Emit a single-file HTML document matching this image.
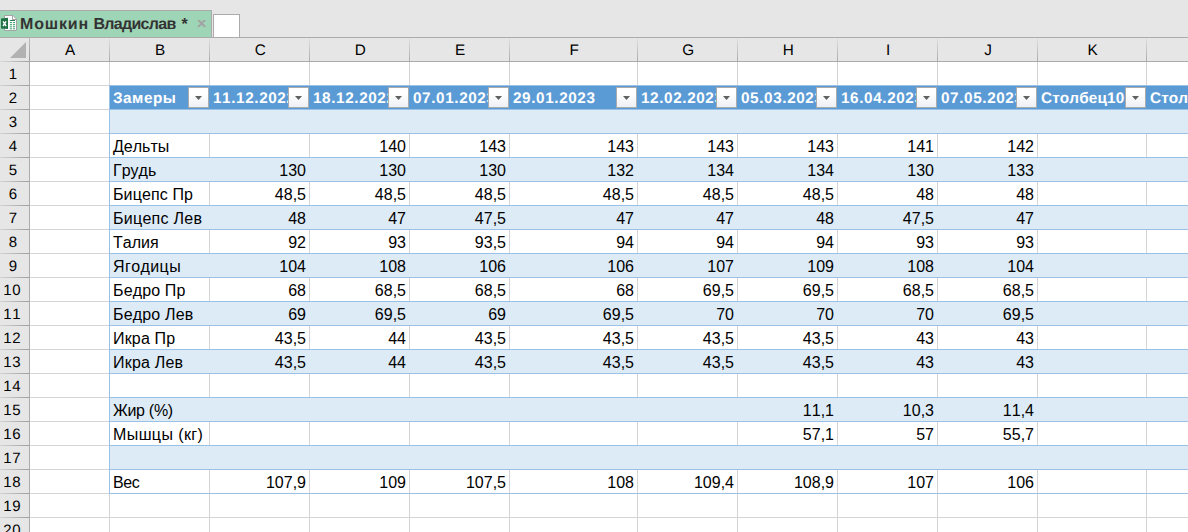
<!DOCTYPE html>
<html lang="ru"><head><meta charset="utf-8"><title>Мошкин Владислав</title>
<style>
html,body{margin:0;padding:0}
body{width:1188px;height:532px;overflow:hidden;position:relative;background:#fff;font-family:"Liberation Sans",sans-serif;font-size:16px;color:#000;font-kerning:none}
div,span{position:absolute;box-sizing:border-box;white-space:nowrap}
.top{left:0;top:0;width:1188px;height:38px;background:#e6e6e6;border-bottom:1px solid #ababab}
.tab{left:0;top:10px;width:212px;height:27px;background:#9fd5b7;border-top:1px solid #ababab;border-right:1px solid #ababab}
.tabt{left:20px;top:4px;font-weight:bold;font-size:16px;letter-spacing:0;text-rendering:geometricPrecision;line-height:20px;color:#333}
.close{left:196.700px;top:2px;font-weight:bold;font-size:13.300px;line-height:20px;color:#a2a2a2;transform:scaleX(1.27);transform-origin:0 0;text-rendering:geometricPrecision}
.tabt span{position:static}.w1{letter-spacing:.85px}.w2{letter-spacing:-0.7px}.w3{margin-left:1.5px}
.nt{left:213px;top:14px;width:27px;height:23px;background:#fff;border:1px solid #ababab;border-bottom:none}
.ch{left:0;top:38px;width:1188px;height:24px;background:#e6e6e6;border-bottom:1px solid #ababab}
.cl{top:38px;height:24px;line-height:25px;text-align:center;padding-left:1.400px;font-size:15.3px;text-rendering:geometricPrecision}
.cd{top:38px;width:1px;height:23px;background:linear-gradient(#e0e0e0,#ababab)}
.rhb{left:0;top:62px;width:30px;height:470px;background:#e6e6e6;border-right:1px solid #ababab}
.rl{left:0;width:29px;padding-right:3px;height:24px;line-height:26px;text-align:center;font-size:15px;text-rendering:geometricPrecision}
.rd{left:0;width:29px;height:1px;background:linear-gradient(90deg,#d2d2d2,#9e9e9e)}
.vg{top:62px;width:1px;height:470px;background:#d4d4d4}
.hg{left:30px;width:1158px;height:1px;background:#d4d4d4}
.band{left:109px;width:1079px;background:#ddebf7}
.bl{left:109px;width:1079px;height:1px;background:#9bc2e6}
.hdr{left:109px;top:85px;width:1079px;height:24px;background:#5b9bd5;border-top:1px solid #9bc2e6}
.ht{top:85px;height:24px;line-height:27px;color:#fff;font-weight:bold;overflow:hidden;font-size:15.300px;letter-spacing:.5px;text-rendering:geometricPrecision}
.fb{top:87px;width:21px;height:21px;border:1px solid #ababab;background:linear-gradient(#fff 30%,#edf0f5)}
.fb svg{position:absolute;left:6px;top:8px}
.c{height:24px;line-height:25px}
.n{text-align:right}
</style></head><body>

<div class="top"></div>
<div class="tab"><svg style="position:absolute;left:0;top:3px" width="18" height="18" viewBox="0 0 18 18"><path d="M4.500 1.500H13L16.500 5V16.500H4.500Z" fill="#fff" stroke="#a3a3a3"/><path d="M12.500 1.500V5.500H16.500" fill="none" stroke="#a3a3a3"/><g fill="#4aa777"><rect x="9.800" y="6" width="5.200" height="1" fill="#2b7d52"/><rect x="9.800" y="8" width="2.200" height="1.100"/><rect x="12.900" y="8" width="2.200" height="1.100"/><rect x="9.800" y="10.100" width="2.200" height="1.100"/><rect x="12.900" y="10.100" width="2.200" height="1.100"/><rect x="9.800" y="12.200" width="2.200" height="1.100"/><rect x="12.900" y="12.200" width="2.200" height="1.100"/><rect x="9.800" y="14.200" width="2.200" height="1.100"/><rect x="12.900" y="14.200" width="2.200" height="1.100"/></g><path d="M1 4.400L8 3.800V15.100L1 14.500Z" fill="#1f7244"/><path d="M3 7.300L6.100 12M6.100 7.300L3 12" stroke="#fff" stroke-width="1.400" fill="none"/></svg><span class="tabt"><span class="w1">Мошкин</span> <span class="w2">Владислав</span> <span class="w3">*</span></span><span class="close">x</span></div>
<div class="nt"></div>
<div class="ch"></div>
<svg style="position:absolute;left:10px;top:42px" width="17" height="17"><path d="M16 0v16h-16z" fill="#b2b2b2"/></svg>
<div class="cd" style="left:29px;background:linear-gradient(#bdbdbd,#9c9c9c)"></div>
<div style="left:0;top:61px;width:29px;height:1px;background:linear-gradient(90deg,#dadada,#a2a2a2)"></div>
<div class="cl" style="left:30px;width:79px">A</div>
<div class="cd" style="left:109px"></div>
<div class="cl" style="left:110px;width:99px">B</div>
<div class="cd" style="left:209px"></div>
<div class="cl" style="left:210px;width:99px">C</div>
<div class="cd" style="left:309px"></div>
<div class="cl" style="left:310px;width:99px">D</div>
<div class="cd" style="left:409px"></div>
<div class="cl" style="left:410px;width:99px">E</div>
<div class="cd" style="left:509px"></div>
<div class="cl" style="left:510px;width:127px">F</div>
<div class="cd" style="left:637px"></div>
<div class="cl" style="left:638px;width:99px">G</div>
<div class="cd" style="left:737px"></div>
<div class="cl" style="left:738px;width:99px">H</div>
<div class="cd" style="left:837px"></div>
<div class="cl" style="left:838px;width:99px">I</div>
<div class="cd" style="left:937px"></div>
<div class="cl" style="left:938px;width:99px">J</div>
<div class="cd" style="left:1037px"></div>
<div class="cl" style="left:1038px;width:108px">K</div>
<div class="cd" style="left:1146px"></div>
<div class="cl" style="left:1147px;width:113px">L</div>
<div class="cd" style="left:1260px"></div>
<div class="rhb"></div>
<div class="rl" style="top:62px">1</div>
<div class="rd" style="top:85px"></div>
<div class="rl" style="top:86px">2</div>
<div class="rd" style="top:109px"></div>
<div class="rl" style="top:110px">3</div>
<div class="rd" style="top:133px"></div>
<div class="rl" style="top:134px">4</div>
<div class="rd" style="top:157px"></div>
<div class="rl" style="top:158px">5</div>
<div class="rd" style="top:181px"></div>
<div class="rl" style="top:182px">6</div>
<div class="rd" style="top:205px"></div>
<div class="rl" style="top:206px">7</div>
<div class="rd" style="top:229px"></div>
<div class="rl" style="top:230px">8</div>
<div class="rd" style="top:253px"></div>
<div class="rl" style="top:254px">9</div>
<div class="rd" style="top:277px"></div>
<div class="rl" style="top:278px;padding-right:4.400px;letter-spacing:.6px">10</div>
<div class="rd" style="top:301px"></div>
<div class="rl" style="top:302px;padding-right:4.400px;letter-spacing:.6px">11</div>
<div class="rd" style="top:325px"></div>
<div class="rl" style="top:326px;padding-right:4.400px;letter-spacing:.6px">12</div>
<div class="rd" style="top:349px"></div>
<div class="rl" style="top:350px;padding-right:4.400px;letter-spacing:.6px">13</div>
<div class="rd" style="top:373px"></div>
<div class="rl" style="top:374px;padding-right:4.400px;letter-spacing:.6px">14</div>
<div class="rd" style="top:397px"></div>
<div class="rl" style="top:398px;padding-right:4.400px;letter-spacing:.6px">15</div>
<div class="rd" style="top:421px"></div>
<div class="rl" style="top:422px;padding-right:4.400px;letter-spacing:.6px">16</div>
<div class="rd" style="top:445px"></div>
<div class="rl" style="top:446px;padding-right:4.400px;letter-spacing:.6px">17</div>
<div class="rd" style="top:469px"></div>
<div class="rl" style="top:470px;padding-right:4.400px;letter-spacing:.6px">18</div>
<div class="rd" style="top:493px"></div>
<div class="rl" style="top:494px;padding-right:4.400px;letter-spacing:.6px">19</div>
<div class="rd" style="top:517px"></div>
<div class="rl" style="top:518px;padding-right:4.400px;letter-spacing:.6px">20</div>
<div class="rd" style="top:541px"></div>
<div class="vg" style="left:109px"></div>
<div class="vg" style="left:209px"></div>
<div class="vg" style="left:309px"></div>
<div class="vg" style="left:409px"></div>
<div class="vg" style="left:509px"></div>
<div class="vg" style="left:637px"></div>
<div class="vg" style="left:737px"></div>
<div class="vg" style="left:837px"></div>
<div class="vg" style="left:937px"></div>
<div class="vg" style="left:1037px"></div>
<div class="vg" style="left:1146px"></div>
<div class="vg" style="left:1260px"></div>
<div class="hg" style="top:85px"></div>
<div class="hg" style="top:109px"></div>
<div class="hg" style="top:133px"></div>
<div class="hg" style="top:157px"></div>
<div class="hg" style="top:181px"></div>
<div class="hg" style="top:205px"></div>
<div class="hg" style="top:229px"></div>
<div class="hg" style="top:253px"></div>
<div class="hg" style="top:277px"></div>
<div class="hg" style="top:301px"></div>
<div class="hg" style="top:325px"></div>
<div class="hg" style="top:349px"></div>
<div class="hg" style="top:373px"></div>
<div class="hg" style="top:397px"></div>
<div class="hg" style="top:421px"></div>
<div class="hg" style="top:445px"></div>
<div class="hg" style="top:469px"></div>
<div class="hg" style="top:493px"></div>
<div class="hg" style="top:517px"></div>
<div class="hg" style="top:541px"></div>
<div class="hdr"></div>
<div class="band" style="top:109px;height:24px"></div>
<div class="band" style="top:157px;height:24px"></div>
<div class="band" style="top:205px;height:24px"></div>
<div class="band" style="top:253px;height:24px"></div>
<div class="band" style="top:301px;height:24px"></div>
<div class="band" style="top:349px;height:24px"></div>
<div class="band" style="top:397px;height:24px"></div>
<div class="band" style="top:445px;height:24px"></div>
<div class="bl" style="top:109px"></div>
<div class="bl" style="top:133px"></div>
<div class="bl" style="top:157px"></div>
<div class="bl" style="top:181px"></div>
<div class="bl" style="top:205px"></div>
<div class="bl" style="top:229px"></div>
<div class="bl" style="top:253px"></div>
<div class="bl" style="top:277px"></div>
<div class="bl" style="top:301px"></div>
<div class="bl" style="top:325px"></div>
<div class="bl" style="top:349px"></div>
<div class="bl" style="top:373px"></div>
<div class="bl" style="top:397px"></div>
<div class="bl" style="top:421px"></div>
<div class="bl" style="top:445px"></div>
<div class="bl" style="top:469px"></div>
<div class="bl" style="top:493px"></div>
<div style="left:109px;top:85px;width:1px;height:408px;background:#9bc2e6"></div>
<div class="ht" style="left:113px;width:75px">Замеры</div>
<div class="fb" style="left:188px"><svg width="7" height="4" viewBox="0 0 7 4"><path d="M0 0H7L3.500 4Z" fill="#606060"/></svg></div>
<div class="ht" style="left:213px;width:75px;letter-spacing:0.6px">11.12.2022</div>
<div class="fb" style="left:288px"><svg width="7" height="4" viewBox="0 0 7 4"><path d="M0 0H7L3.500 4Z" fill="#606060"/></svg></div>
<div class="ht" style="left:313px;width:75px;letter-spacing:0.6px">18.12.2022</div>
<div class="fb" style="left:388px"><svg width="7" height="4" viewBox="0 0 7 4"><path d="M0 0H7L3.500 4Z" fill="#606060"/></svg></div>
<div class="ht" style="left:413px;width:75px;letter-spacing:0.6px">07.01.2023</div>
<div class="fb" style="left:488px"><svg width="7" height="4" viewBox="0 0 7 4"><path d="M0 0H7L3.500 4Z" fill="#606060"/></svg></div>
<div class="ht" style="left:513px;width:103px;letter-spacing:0.6px">29.01.2023</div>
<div class="fb" style="left:616px"><svg width="7" height="4" viewBox="0 0 7 4"><path d="M0 0H7L3.500 4Z" fill="#606060"/></svg></div>
<div class="ht" style="left:641px;width:75px;letter-spacing:0.6px">12.02.2023</div>
<div class="fb" style="left:716px"><svg width="7" height="4" viewBox="0 0 7 4"><path d="M0 0H7L3.500 4Z" fill="#606060"/></svg></div>
<div class="ht" style="left:741px;width:75px;letter-spacing:0.6px">05.03.2023</div>
<div class="fb" style="left:816px"><svg width="7" height="4" viewBox="0 0 7 4"><path d="M0 0H7L3.500 4Z" fill="#606060"/></svg></div>
<div class="ht" style="left:841px;width:75px;letter-spacing:0.6px">16.04.2023</div>
<div class="fb" style="left:916px"><svg width="7" height="4" viewBox="0 0 7 4"><path d="M0 0H7L3.500 4Z" fill="#606060"/></svg></div>
<div class="ht" style="left:941px;width:75px;letter-spacing:0.6px">07.05.2023</div>
<div class="fb" style="left:1016px"><svg width="7" height="4" viewBox="0 0 7 4"><path d="M0 0H7L3.500 4Z" fill="#606060"/></svg></div>
<div class="ht" style="left:1041px;width:84px;letter-spacing:.15px">Столбец10</div>
<div class="fb" style="left:1125px"><svg width="7" height="4" viewBox="0 0 7 4"><path d="M0 0H7L3.500 4Z" fill="#606060"/></svg></div>
<div class="ht" style="left:1150px;width:89px;letter-spacing:.15px">Столбец11</div>
<div class="fb" style="left:1239px"><svg width="7" height="4" viewBox="0 0 7 4"><path d="M0 0H7L3.500 4Z" fill="#606060"/></svg></div>
<div class="c" style="left:113px;top:134px">Дельты</div>
<div class="c n" style="left:310px;width:96px;top:134px">140</div>
<div class="c n" style="left:410px;width:96px;top:134px">143</div>
<div class="c n" style="left:510px;width:124px;top:134px">143</div>
<div class="c n" style="left:638px;width:96px;top:134px">143</div>
<div class="c n" style="left:738px;width:96px;top:134px">143</div>
<div class="c n" style="left:838px;width:96px;top:134px">141</div>
<div class="c n" style="left:938px;width:96px;top:134px">142</div>
<div class="c" style="left:113px;top:158px">Грудь</div>
<div class="c n" style="left:210px;width:96px;top:158px">130</div>
<div class="c n" style="left:310px;width:96px;top:158px">130</div>
<div class="c n" style="left:410px;width:96px;top:158px">130</div>
<div class="c n" style="left:510px;width:124px;top:158px">132</div>
<div class="c n" style="left:638px;width:96px;top:158px">134</div>
<div class="c n" style="left:738px;width:96px;top:158px">134</div>
<div class="c n" style="left:838px;width:96px;top:158px">130</div>
<div class="c n" style="left:938px;width:96px;top:158px">133</div>
<div class="c" style="left:113px;top:182px;letter-spacing:0.12px">Бицепс Пр</div>
<div class="c n" style="left:210px;width:96px;top:182px">48,5</div>
<div class="c n" style="left:310px;width:96px;top:182px">48,5</div>
<div class="c n" style="left:410px;width:96px;top:182px">48,5</div>
<div class="c n" style="left:510px;width:124px;top:182px">48,5</div>
<div class="c n" style="left:638px;width:96px;top:182px">48,5</div>
<div class="c n" style="left:738px;width:96px;top:182px">48,5</div>
<div class="c n" style="left:838px;width:96px;top:182px">48</div>
<div class="c n" style="left:938px;width:96px;top:182px">48</div>
<div class="c" style="left:113px;top:206px;letter-spacing:0.27px">Бицепс Лев</div>
<div class="c n" style="left:210px;width:96px;top:206px">48</div>
<div class="c n" style="left:310px;width:96px;top:206px">47</div>
<div class="c n" style="left:410px;width:96px;top:206px">47,5</div>
<div class="c n" style="left:510px;width:124px;top:206px">47</div>
<div class="c n" style="left:638px;width:96px;top:206px">47</div>
<div class="c n" style="left:738px;width:96px;top:206px">48</div>
<div class="c n" style="left:838px;width:96px;top:206px">47,5</div>
<div class="c n" style="left:938px;width:96px;top:206px">47</div>
<div class="c" style="left:113px;top:230px">Талия</div>
<div class="c n" style="left:210px;width:96px;top:230px">92</div>
<div class="c n" style="left:310px;width:96px;top:230px">93</div>
<div class="c n" style="left:410px;width:96px;top:230px">93,5</div>
<div class="c n" style="left:510px;width:124px;top:230px">94</div>
<div class="c n" style="left:638px;width:96px;top:230px">94</div>
<div class="c n" style="left:738px;width:96px;top:230px">94</div>
<div class="c n" style="left:838px;width:96px;top:230px">93</div>
<div class="c n" style="left:938px;width:96px;top:230px">93</div>
<div class="c" style="left:113px;top:254px;letter-spacing:0.4px">Ягодицы</div>
<div class="c n" style="left:210px;width:96px;top:254px">104</div>
<div class="c n" style="left:310px;width:96px;top:254px">108</div>
<div class="c n" style="left:410px;width:96px;top:254px">106</div>
<div class="c n" style="left:510px;width:124px;top:254px">106</div>
<div class="c n" style="left:638px;width:96px;top:254px">107</div>
<div class="c n" style="left:738px;width:96px;top:254px">109</div>
<div class="c n" style="left:838px;width:96px;top:254px">108</div>
<div class="c n" style="left:938px;width:96px;top:254px">104</div>
<div class="c" style="left:113px;top:278px;letter-spacing:0.14px">Бедро Пр</div>
<div class="c n" style="left:210px;width:96px;top:278px">68</div>
<div class="c n" style="left:310px;width:96px;top:278px">68,5</div>
<div class="c n" style="left:410px;width:96px;top:278px">68,5</div>
<div class="c n" style="left:510px;width:124px;top:278px">68</div>
<div class="c n" style="left:638px;width:96px;top:278px">69,5</div>
<div class="c n" style="left:738px;width:96px;top:278px">69,5</div>
<div class="c n" style="left:838px;width:96px;top:278px">68,5</div>
<div class="c n" style="left:938px;width:96px;top:278px">68,5</div>
<div class="c" style="left:113px;top:302px;letter-spacing:0.18px">Бедро Лев</div>
<div class="c n" style="left:210px;width:96px;top:302px">69</div>
<div class="c n" style="left:310px;width:96px;top:302px">69,5</div>
<div class="c n" style="left:410px;width:96px;top:302px">69</div>
<div class="c n" style="left:510px;width:124px;top:302px">69,5</div>
<div class="c n" style="left:638px;width:96px;top:302px">70</div>
<div class="c n" style="left:738px;width:96px;top:302px">70</div>
<div class="c n" style="left:838px;width:96px;top:302px">70</div>
<div class="c n" style="left:938px;width:96px;top:302px">69,5</div>
<div class="c" style="left:113px;top:326px;letter-spacing:0.16px">Икра Пр</div>
<div class="c n" style="left:210px;width:96px;top:326px">43,5</div>
<div class="c n" style="left:310px;width:96px;top:326px">44</div>
<div class="c n" style="left:410px;width:96px;top:326px">43,5</div>
<div class="c n" style="left:510px;width:124px;top:326px">43,5</div>
<div class="c n" style="left:638px;width:96px;top:326px">43,5</div>
<div class="c n" style="left:738px;width:96px;top:326px">43,5</div>
<div class="c n" style="left:838px;width:96px;top:326px">43</div>
<div class="c n" style="left:938px;width:96px;top:326px">43</div>
<div class="c" style="left:113px;top:350px;letter-spacing:0.2px">Икра Лев</div>
<div class="c n" style="left:210px;width:96px;top:350px">43,5</div>
<div class="c n" style="left:310px;width:96px;top:350px">44</div>
<div class="c n" style="left:410px;width:96px;top:350px">43,5</div>
<div class="c n" style="left:510px;width:124px;top:350px">43,5</div>
<div class="c n" style="left:638px;width:96px;top:350px">43,5</div>
<div class="c n" style="left:738px;width:96px;top:350px">43,5</div>
<div class="c n" style="left:838px;width:96px;top:350px">43</div>
<div class="c n" style="left:938px;width:96px;top:350px">43</div>
<div class="c" style="left:113px;top:398px;letter-spacing:-0.3px">Жир (%)</div>
<div class="c n" style="left:738px;width:96px;top:398px">11,1</div>
<div class="c n" style="left:838px;width:96px;top:398px">10,3</div>
<div class="c n" style="left:938px;width:96px;top:398px">11,4</div>
<div class="c" style="left:113px;top:422px;letter-spacing:0.4px">Мышцы (кг)</div>
<div class="c n" style="left:738px;width:96px;top:422px">57,1</div>
<div class="c n" style="left:838px;width:96px;top:422px">57</div>
<div class="c n" style="left:938px;width:96px;top:422px">55,7</div>
<div class="c" style="left:113px;top:470px;letter-spacing:-0.4px">Вес</div>
<div class="c n" style="left:210px;width:96px;top:470px">107,9</div>
<div class="c n" style="left:310px;width:96px;top:470px">109</div>
<div class="c n" style="left:410px;width:96px;top:470px">107,5</div>
<div class="c n" style="left:510px;width:124px;top:470px">108</div>
<div class="c n" style="left:638px;width:96px;top:470px">109,4</div>
<div class="c n" style="left:738px;width:96px;top:470px">108,9</div>
<div class="c n" style="left:838px;width:96px;top:470px">107</div>
<div class="c n" style="left:938px;width:96px;top:470px">106</div>
</body></html>
